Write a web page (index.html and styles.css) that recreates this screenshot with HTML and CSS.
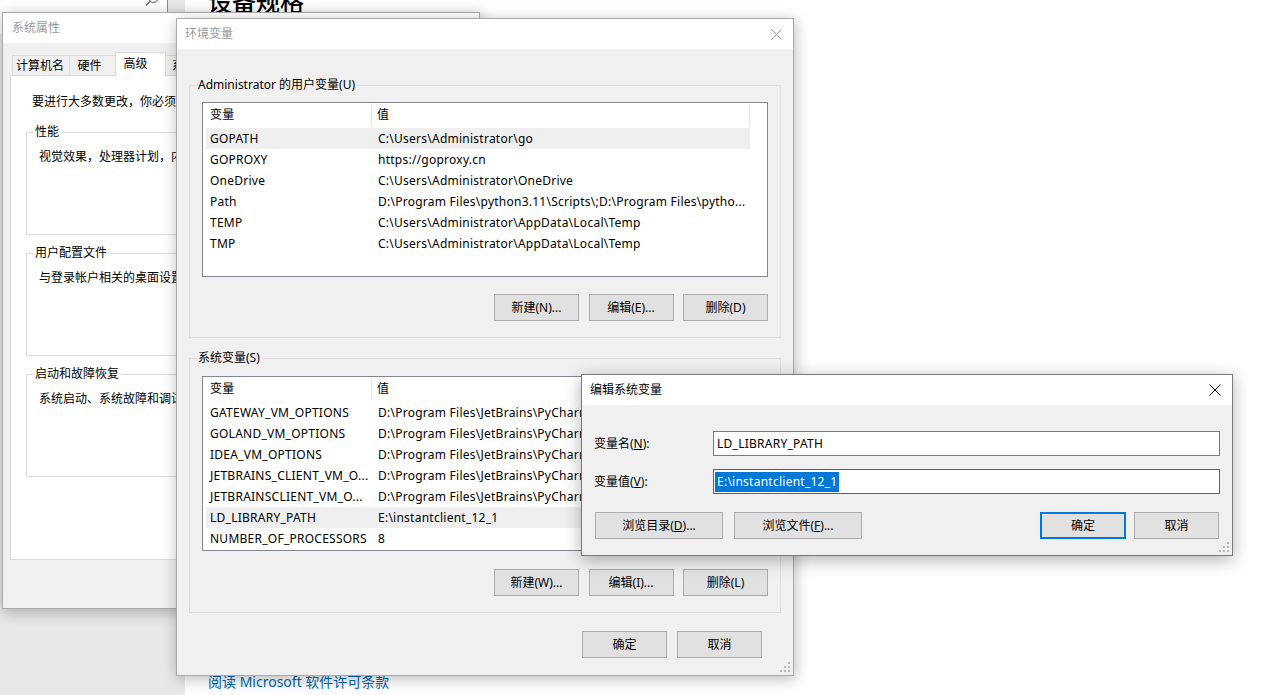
FILE: index.html
```html
<!DOCTYPE html>
<html>
<head>
<meta charset="UTF-8">
<title>环境变量</title>
<link rel="stylesheet" href="styles.css">
</head>
<body>
<div class="desktop">

    <!-- settings page behind the dialogs -->
    <div class="settings">
        <div class="sidebar">
            <div class="search">
                <svg class="search-icon" width="14" height="14" viewBox="0 0 14 14"><circle cx="8.5" cy="5" r="4.5" fill="none" stroke="#555" stroke-width="1"/><path d="M5.3 8.2L1 12.5" stroke="#555" stroke-width="1.2"/></svg>
            </div>
        </div>
        <div class="about">
            <h1>设备规格</h1>
            <a class="license" href="#">阅读 Microsoft 软件许可条款</a>
        </div>
    </div>

    <!-- 系统属性 -->
    <div class="window sysprops">
        <div class="titlebar inactive"><span>系统属性</span></div>
        <div class="body">
            <div class="tabs">
                <div class="tab w58">计算机名</div>
                <div class="tab w48">硬件</div>
                <div class="tab selected">高级</div>
                <div class="tab w62">系统保护</div>
                <div class="tab w48">远程</div>
            </div>
            <div class="tabpanel">
                <p class="intro">要进行大多数更改，你必须作为管理员登录。</p>
                <fieldset class="group small">
                    <legend>性能</legend>
                    <p>视觉效果，处理器计划，内存使用，以及虚拟内存</p>
                </fieldset>
                <fieldset class="group small">
                    <legend>用户配置文件</legend>
                    <p>与登录帐户相关的桌面设置</p>
                </fieldset>
                <fieldset class="group small">
                    <legend>启动和故障恢复</legend>
                    <p>系统启动、系统故障和调试信息</p>
                </fieldset>
            </div>
        </div>
    </div>

    <!-- 环境变量 -->
    <div class="window envvars">
        <div class="titlebar inactive">
            <span>环境变量</span>
            <span class="close"><svg width="11" height="11" viewBox="0 0 11 11"><path d="M0.5 0.5L10.5 10.5M10.5 0.5L0.5 10.5" stroke="#999" stroke-width="1"/></svg></span>
        </div>
        <div class="body">
            <fieldset class="group">
                <legend>Administrator 的用户变量(U)</legend>
                <div class="listview">
                    <div class="lv-head"><div>变量</div><div>值</div></div>
                    <div class="lv-rows">
                        <div class="lv-row picked"><div>GOPATH</div><div>C:\Users\Administrator\go</div></div>
                        <div class="lv-row"><div>GOPROXY</div><div>https://goproxy.cn</div></div>
                        <div class="lv-row"><div>OneDrive</div><div>C:\Users\Administrator\OneDrive</div></div>
                        <div class="lv-row"><div>Path</div><div>D:\Program Files\python3.11\Scripts\;D:\Program Files\pytho...</div></div>
                        <div class="lv-row"><div>TEMP</div><div>C:\Users\Administrator\AppData\Local\Temp</div></div>
                        <div class="lv-row"><div>TMP</div><div>C:\Users\Administrator\AppData\Local\Temp</div></div>
                    </div>
                </div>
                <div class="btnrow">
                    <button>新建(N)...</button>
                    <button>编辑(E)...</button>
                    <button>删除(D)</button>
                </div>
            </fieldset>

            <fieldset class="group sys">
                <legend>系统变量(S)</legend>
                <div class="listview">
                    <div class="lv-head"><div>变量</div><div>值</div></div>
                    <div class="lv-rows">
                        <div class="lv-row"><div>GATEWAY_VM_OPTIONS</div><div>D:\Program Files\JetBrains\PyCharm 2023.2\bin\gateway.vmoptions</div></div>
                        <div class="lv-row"><div>GOLAND_VM_OPTIONS</div><div>D:\Program Files\JetBrains\PyCharm 2023.2\bin\goland.vmoptions</div></div>
                        <div class="lv-row"><div>IDEA_VM_OPTIONS</div><div>D:\Program Files\JetBrains\PyCharm 2023.2\bin\idea.vmoptions</div></div>
                        <div class="lv-row"><div>JETBRAINS_CLIENT_VM_O...</div><div>D:\Program Files\JetBrains\PyCharm 2023.2\bin\jetbrains_client.vmoptions</div></div>
                        <div class="lv-row"><div>JETBRAINSCLIENT_VM_O...</div><div>D:\Program Files\JetBrains\PyCharm 2023.2\bin\jetbrainsclient.vmoptions</div></div>
                        <div class="lv-row picked"><div>LD_LIBRARY_PATH</div><div>E:\instantclient_12_1</div></div>
                        <div class="lv-row"><div>NUMBER_OF_PROCESSORS</div><div>8</div></div>
                    </div>
                </div>
                <div class="btnrow">
                    <button>新建(W)...</button>
                    <button>编辑(I)...</button>
                    <button>删除(L)</button>
                </div>
            </fieldset>

            <div class="footer">
                <button>确定</button>
                <button>取消</button>
            </div>
        </div>
        <svg class="grip" width="10" height="10" viewBox="0 0 10 10"><g fill="#b8b8b8"><rect x="8" y="0" width="2" height="2"/><rect x="8" y="4" width="2" height="2"/><rect x="4" y="4" width="2" height="2"/><rect x="8" y="8" width="2" height="2"/><rect x="4" y="8" width="2" height="2"/><rect x="0" y="8" width="2" height="2"/></g></svg>
    </div>

    <!-- 编辑系统变量 -->
    <div class="window editvar">
        <div class="titlebar">
            <span>编辑系统变量</span>
            <span class="close"><svg width="12" height="12" viewBox="0 0 12 12"><path d="M0.5 0.5L11.5 11.5M11.5 0.5L0.5 11.5" stroke="#000" stroke-width="1"/></svg></span>
        </div>
        <div class="body">
            <div class="field">
                <label>变量名(<u>N</u>):</label>
                <div class="textbox">LD_LIBRARY_PATH</div>
            </div>
            <div class="field">
                <label>变量值(<u>V</u>):</label>
                <div class="textbox focus"><span class="sel">E:\instantclient_12_1</span></div>
            </div>
            <div class="actions">
                <div class="pair">
                    <button class="wide">浏览目录(<u>D</u>)...</button>
                    <button class="wide">浏览文件(<u>F</u>)...</button>
                </div>
                <div class="pair right">
                    <button class="default">确定</button>
                    <button>取消</button>
                </div>
            </div>
        </div>
        <svg class="grip" width="10" height="10" viewBox="0 0 10 10"><g fill="#b8b8b8"><rect x="8" y="0" width="2" height="2"/><rect x="8" y="4" width="2" height="2"/><rect x="4" y="4" width="2" height="2"/><rect x="8" y="8" width="2" height="2"/><rect x="4" y="8" width="2" height="2"/><rect x="0" y="8" width="2" height="2"/></g></svg>
    </div>

</div>
</body>
</html>
```

FILE: styles.css
```css
* {
    box-sizing: border-box;
}

body {
    margin: 0;
    font-family: "Noto Sans", "Noto Sans CJK SC", sans-serif;
    font-size: 12px;
    line-height: 16px;
    color: #000;
}

.desktop {
    position: relative;
    width: 1282px;
    height: 695px;
    overflow: hidden;
    background: #fff;
}

/* settings page */
.settings {
    display: flex;
    height: 100%;
}
.sidebar {
    width: 185px;
    background: #e8e8e8;
}
.search {
    width: 168px;
    height: 34px;
    background: #fff;
    border-right: 1px solid #8a8a8a;
    display: flex;
    justify-content: flex-end;
    padding-right: 8px;
}
.search-icon {
    margin-top: -7px;
}
.about {
    flex: 1;
    display: flex;
    flex-direction: column;
    justify-content: space-between;
    padding: 0 0 3px 23px;
}
.about h1 {
    margin: -15px 0 0 0;
    font-family: "Noto Sans CJK SC", sans-serif;
    font-size: 24px;
    font-weight: 500;
    line-height: 32px;
}
.license {
    font-family: "Noto Sans", "Noto Sans CJK SC", sans-serif;
    font-size: 14px;
    line-height: 20px;
    color: #0067b8;
    text-decoration: none;
}

/* windows */
.window {
    position: absolute;
    background: #f0f0f0;
    border: 1px solid #aaaaaa;
    box-shadow: 1px 3px 14px rgba(0, 0, 0, 0.28);
}
.titlebar {
    height: 30px;
    background: #fff;
    display: flex;
    align-items: center;
    justify-content: space-between;
    padding-left: 8px;
}
.titlebar.inactive {
    color: #999;
}
.close {
    width: 34px;
    display: flex;
    justify-content: center;
}
.grip {
    position: absolute;
    right: 3px;
    bottom: 3px;
}

button {
    font-family: inherit;
    font-size: 12px;
    line-height: 16px;
    color: #000;
    background: #e1e1e1;
    border: 1px solid #adadad;
    width: 85px;
    height: 27px;
    padding: 0;
    margin: 0;
}
button.default {
    border: 2px solid #0078d7;
    width: 86px;
}

/* 系统属性 */
.sysprops {
    left: 2px;
    top: 12px;
    width: 478px;
    height: 597px;
    z-index: 1;
}
.sysprops .titlebar {
    padding-left: 9px;
}
.sysprops .body {
    padding: 9px 8px 0 7px;
}
.tabs {
    display: flex;
    align-items: flex-end;
    height: 23px;
    padding-left: 2px;
    position: relative;
    z-index: 1;
}
.tab {
    height: 20px;
    line-height: 19px;
    text-align: center;
    border: 1px solid #d9d9d9;
    border-bottom: none;
    margin-right: -1px;
}
.w58 { width: 58px; padding-right: 2px; }
.w48 { width: 49px; padding-right: 8px; }
.w62 { width: 62px; }
.tab.selected {
    width: 51px;
    height: 24px;
    margin: 0 -1px -1px -2px;
    background: #fff;
    padding-right: 10px;
    line-height: 21px;
    position: relative;
}
.tabpanel {
    background: #fff;
    border: 1px solid #d9d9d9;
    height: 485px;
    padding: 0 15px 0 15px;
}
.intro {
    margin: 18px 0 14px 6px;
}
.group {
    margin: 0;
    border: 1px solid #dcdcdc;
    padding: 10px 12px 16px 12px;
    min-width: 0;
}
.group legend {
    margin-left: -6px;
    padding: 0 2px;
    line-height: 16px;
}
.group.small {
    height: 111px;
    padding-top: 9px;
    margin-bottom: 10px;
}
.group.small p {
    margin: 0;
    white-space: nowrap;
}

/* 环境变量 */
.envvars {
    left: 176px;
    top: 18px;
    width: 618px;
    height: 658px;
    z-index: 2;
}
.envvars .body {
    padding: 28px 12px 0 12px;
}
.envvars .group {
    padding-top: 9px;
}
.envvars .group.sys {
    margin-top: 12px;
    padding-top: 10px;
}
.listview {
    background: #fff;
    border: 1px solid #828790;
    height: 175px;
    overflow: hidden;
    letter-spacing: 0.25px;
}
.lv-head {
    display: grid;
    grid-template-columns: 169px 378px;
    height: 22px;
    line-height: 22px;
    padding-top: 1px;
}
.lv-head div {
    border-right: 1px solid #e5e5e5;
    padding-left: 7px;
}
.lv-head div + div {
    padding-left: 5px;
}
.lv-rows {
    padding: 3px 0 0 3px;
}
.lv-row {
    display: grid;
    grid-template-columns: 166px 378px;
    width: 544px;
    height: 21px;
    line-height: 21px;
}
.lv-row div {
    white-space: nowrap;
    overflow: hidden;
    padding-left: 4px;
}
.lv-row div + div {
    padding-left: 6px;
}
.lv-row.picked {
    background: #efefef;
}
.btnrow {
    display: flex;
    justify-content: flex-end;
    gap: 9.5px;
    margin-top: 17px;
}
.envvars .group.sys .btnrow {
    margin-top: 18px;
}
.footer {
    display: flex;
    justify-content: flex-end;
    gap: 10px;
    margin-top: 18px;
    padding-right: 19px;
}

/* 编辑系统变量 */
.editvar {
    left: 581px;
    top: 374px;
    width: 652px;
    height: 182px;
    z-index: 3;
    border-color: #7a7a7a;
    box-shadow: 0 4px 16px rgba(0, 0, 0, 0.3);
}
.editvar .body {
    padding: 26px 12px 0 12px;
}
.field {
    display: flex;
    align-items: center;
    margin-bottom: 13px;
}
.field label {
    width: 119px;
}
.textbox {
    flex: 1;
    height: 25px;
    background: #fff;
    border: 1px solid #7a7a7a;
    padding: 0 3px;
    line-height: 23px;
    white-space: nowrap;
    letter-spacing: 0.25px;
}
.textbox.focus {
    border-color: #0078d7;
    padding-left: 1px;
}
.sel {
    display: inline-block;
    background: #0078d7;
    color: #fff;
    line-height: 20px;
    padding: 0 2px 0 2px;
    vertical-align: middle;
    margin-top: -1px;
}
.actions {
    display: flex;
    justify-content: space-between;
    margin-top: 18px;
    padding: 0 1px;
}
.pair {
    display: flex;
    gap: 11px;
}
.pair.right {
    gap: 8px;
}
button.wide {
    width: 128px;
}
```
